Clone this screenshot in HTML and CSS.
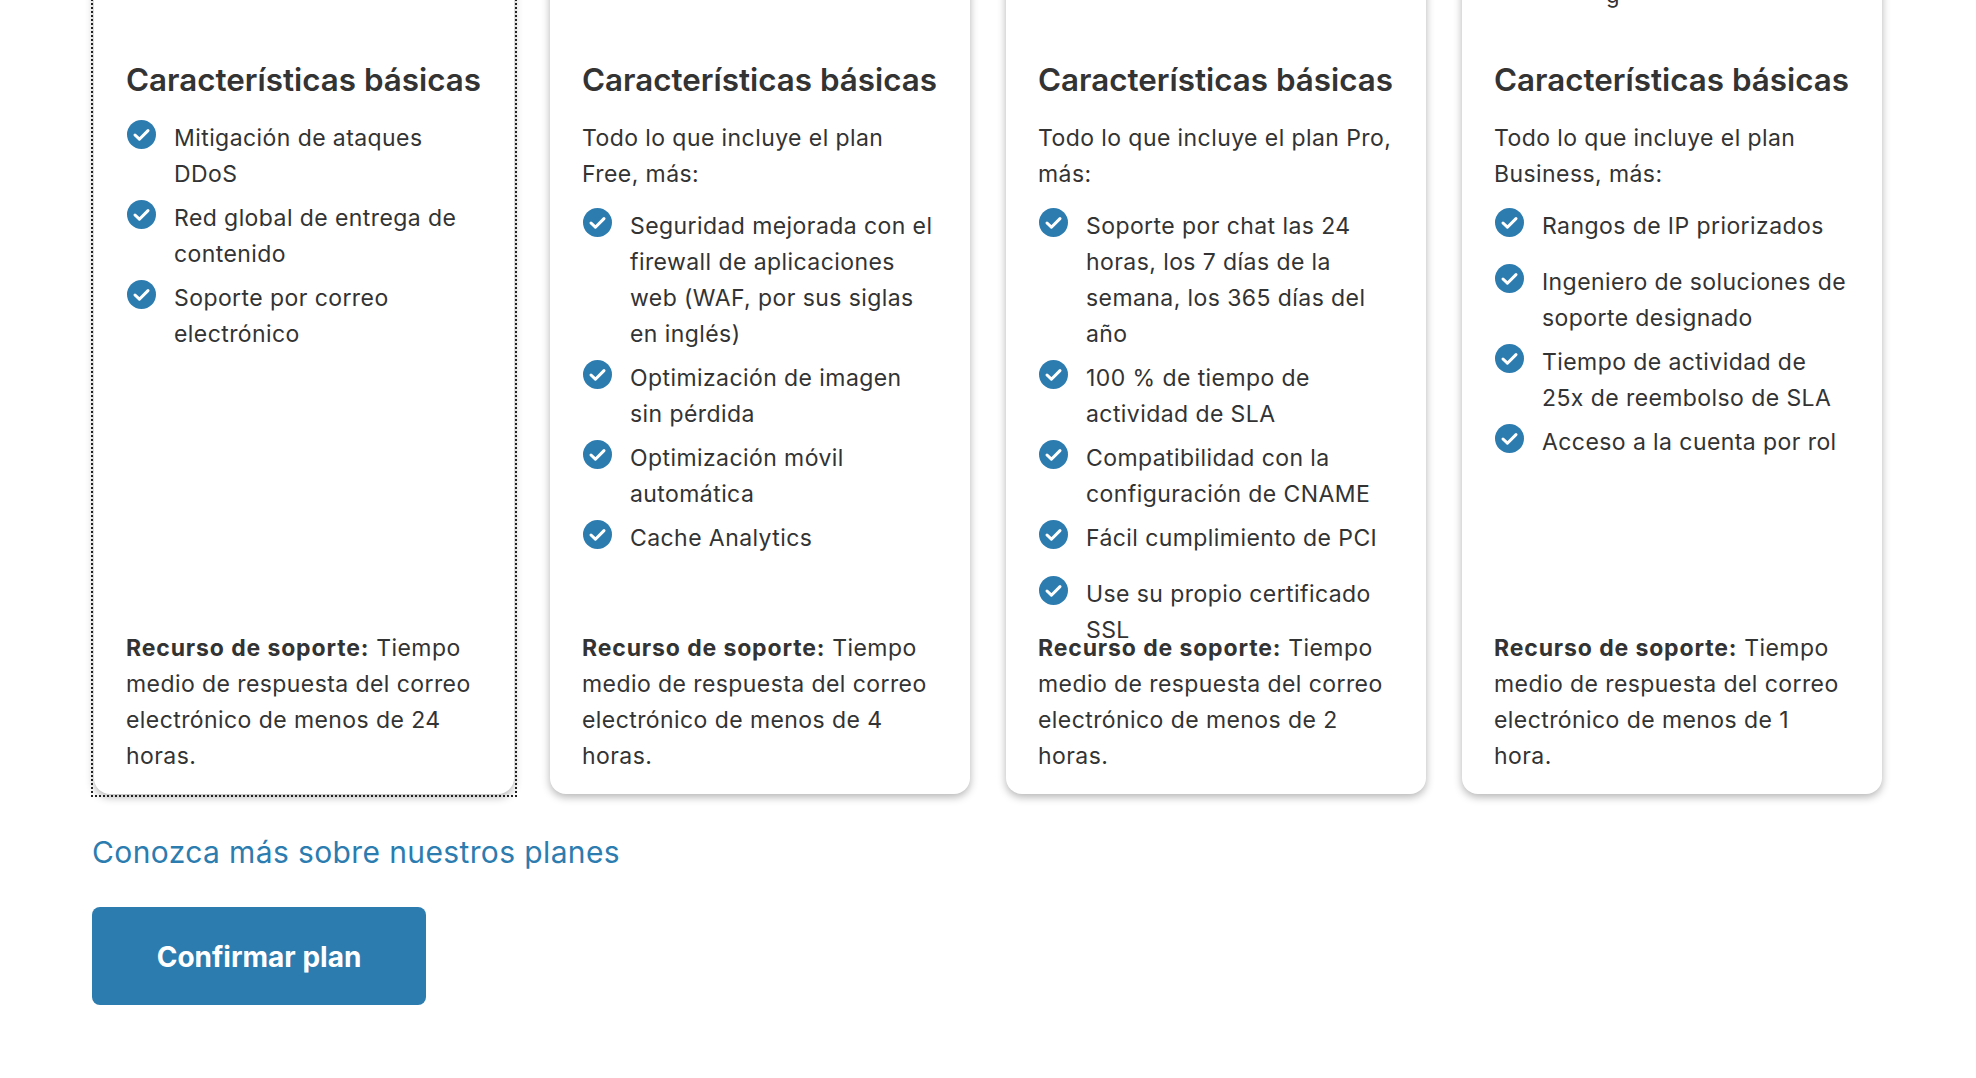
FILE: index.html
```html
<!DOCTYPE html>
<html lang="es">
<head>
<meta charset="utf-8">
<title>Confirmar plan</title>
<link rel="stylesheet" href="styles.css">
</head>
<body>
<svg class="defs" width="0" height="0" aria-hidden="true">
  <symbol id="check" viewBox="0 0 29 29">
    <circle cx="14.5" cy="14.5" r="14.5" fill="#2c7cb0"/>
    <path d="M8 15l4.4 4.2L21 10.6" fill="none" stroke="#fff" stroke-width="3" stroke-linecap="round" stroke-linejoin="round"/>
  </symbol>
</svg>
<main class="page">
  <div class="plans">
    <section class="card card-focus">
      <div class="clip"></div>
      <div class="features">
        <h3>Características básicas</h3>
        <ul>
          <li><svg class="tick"><use href="#check"/></svg><span>Mitigación de ataques DDoS</span></li>
          <li><svg class="tick"><use href="#check"/></svg><span>Red global de entrega de contenido</span></li>
          <li><svg class="tick"><use href="#check"/></svg><span>Soporte por correo electrónico</span></li>
        </ul>
      </div>
      <p class="support"><strong>Recurso de soporte:</strong> Tiempo medio de respuesta del correo electrónico de menos de 24 horas.</p>
    </section>
    <section class="card">
      <div class="clip"></div>
      <div class="features">
        <h3>Características básicas</h3>
        <p class="lead">Todo lo que incluye el plan Free, más:</p>
        <ul>
          <li><svg class="tick"><use href="#check"/></svg><span>Seguridad mejorada con el firewall de aplicaciones web (WAF, por sus siglas en inglés)</span></li>
          <li><svg class="tick"><use href="#check"/></svg><span>Optimización de imagen sin pérdida</span></li>
          <li><svg class="tick"><use href="#check"/></svg><span>Optimización móvil automática</span></li>
          <li><svg class="tick"><use href="#check"/></svg><span>Cache Analytics</span></li>
        </ul>
      </div>
      <p class="support"><strong>Recurso de soporte:</strong> Tiempo medio de respuesta del correo electrónico de menos de 4 horas.</p>
    </section>
    <section class="card">
      <div class="clip"></div>
      <div class="features">
        <h3>Características básicas</h3>
        <p class="lead">Todo lo que incluye el plan Pro, más:</p>
        <ul>
          <li><svg class="tick"><use href="#check"/></svg><span>Soporte por chat las 24 horas, los 7 días de la semana, los 365 días del año</span></li>
          <li><svg class="tick"><use href="#check"/></svg><span>100 % de tiempo de actividad de SLA</span></li>
          <li><svg class="tick"><use href="#check"/></svg><span>Compatibilidad con la configuración de CNAME</span></li>
          <li><svg class="tick"><use href="#check"/></svg><span>Fácil cumplimiento de PCI</span></li>
          <li><svg class="tick"><use href="#check"/></svg><span>Use su propio certificado SSL</span></li>
        </ul>
      </div>
      <p class="support"><strong>Recurso de soporte:</strong> Tiempo medio de respuesta del correo electrónico de menos de 2 horas.</p>
    </section>
    <section class="card">
      <div class="clip"><span class="clip-text">g</span></div>
      <div class="features">
        <h3>Características básicas</h3>
        <p class="lead">Todo lo que incluye el plan Business, más:</p>
        <ul>
          <li><svg class="tick"><use href="#check"/></svg><span>Rangos de IP priorizados</span></li>
          <li><svg class="tick"><use href="#check"/></svg><span>Ingeniero de soluciones de soporte designado</span></li>
          <li><svg class="tick"><use href="#check"/></svg><span>Tiempo de actividad de 25x de reembolso de SLA</span></li>
          <li><svg class="tick"><use href="#check"/></svg><span>Acceso a la cuenta por rol</span></li>
        </ul>
      </div>
      <p class="support"><strong>Recurso de soporte:</strong> Tiempo medio de respuesta del correo electrónico de menos de 1 hora.</p>
    </section>
  </div>
  <a class="more" href="#">Conozca más sobre nuestros planes</a>
  <button class="confirm" type="button">Confirmar plan</button>
</main>
</body>
</html>
```
FILE: styles.css
```css
* { box-sizing: border-box; }
html, body { margin: 0; height: 100%; overflow: hidden; background: #fff; }
body { font-family: Inter, "Liberation Sans", sans-serif; color: #333; }
.defs { position: absolute; }
.page { display: flex; flex-direction: column; align-items: flex-start; padding: 0 92px; margin-top: -60px; }
.plans { display: grid; grid-template-columns: repeat(4, 420px); column-gap: 36px; margin-left: 2px; }
.card { position: relative; display: flex; flex-direction: column; height: 854px; padding: 0 32px; background: #fff; border-radius: 16px; box-shadow: 0 3px 9px rgba(0, 0, 0, .3); }
.card-focus::after { content: ""; position: absolute; inset: -3px; pointer-events: none;
  background:
    repeating-linear-gradient(90deg, #222 0 2px, transparent 2px 4px) left top / 100% 2px no-repeat,
    repeating-linear-gradient(90deg, #222 0 2px, transparent 2px 4px) left bottom / 100% 2px no-repeat,
    repeating-linear-gradient(0deg, #222 0 2px, transparent 2px 4px) left top / 2px 100% no-repeat,
    repeating-linear-gradient(0deg, #222 0 2px, transparent 2px 4px) right top / 2px 100% no-repeat;
}
.clip { height: 120px; position: relative; }
.clip-text { position: absolute; left: 112px; bottom: 62px; font-size: 22px; line-height: 6px; height: 6px; }
.features { height: 570px; }
h3 { margin: 0 0 20px; font-size: 31.35px; line-height: 40px; font-weight: 600; white-space: nowrap; }
.lead { margin: 0 0 16px; font-size: 23px; line-height: 36px; letter-spacing: .42px; }
ul { list-style: none; margin: 0; padding: 0; }
li { display: flex; min-height: 48px; margin-bottom: 8px; font-size: 23px; line-height: 36px; letter-spacing: .42px; }
.tick { flex: none; width: 29px; height: 29px; margin: 0 18px 0 1px; }
.support { margin: 0; font-size: 23px; line-height: 36px; letter-spacing: .42px; }
.support strong { font-weight: 700; letter-spacing: .87px; }
.more { margin-top: 39px; font-size: 30px; line-height: 38px; letter-spacing: .38px; color: #2c7cb0; text-decoration: none; }
.confirm { margin-top: 36px; width: 334px; height: 98px; padding: 2px 0 0; border: 0; border-radius: 8px; background: #2c7cb0; color: #fff; font: 700 28px Inter, "Liberation Sans", sans-serif; }
```
